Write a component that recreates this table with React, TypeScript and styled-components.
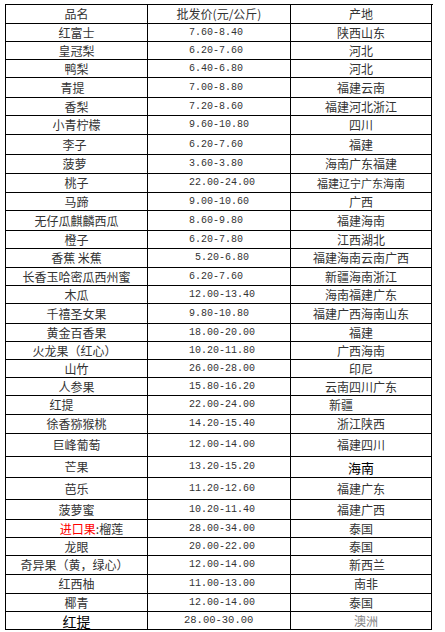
import type { ReactNode } from 'react';
import styled, { createGlobalStyle } from 'styled-components';

const GlobalStyle = createGlobalStyle`
  body {
    margin: 0;
    background: #fff;
    font-family: "Noto Sans CJK SC", "Liberation Sans", sans-serif;
  }
`;

const Page = styled.div`
  padding: 4px 0 0 5px;
`;

const Table = styled.div`
  display: flex;
  flex-direction: column;
  width: 427px;
  border-top: 1px solid #000;
  border-left: 1px solid #000;
`;

const Row = styled.div<{ $h: number }>`
  display: grid;
  grid-template-columns: 142px 143px 141px;
  height: ${(p) => p.$h}px;
`;

const Cell = styled.div<{ $shift?: number; $size?: number; $tone?: 'grey' | 'strong' }>`
  box-sizing: border-box;
  display: flex;
  align-items: center;
  justify-content: center;
  padding-left: ${(p) => Math.max(0, (p.$shift ?? 0) * 2)}px;
  padding-right: ${(p) => Math.max(0, -(p.$shift ?? 0) * 2)}px;
  border-right: 1px solid #000;
  border-bottom: 1px solid #000;
  color: ${(p) => (p.$tone === 'grey' ? '#858585' : p.$tone === 'strong' ? '#000' : '#333')};
  font-size: ${(p) => p.$size ?? 12}px;
  line-height: 1;
  white-space: pre;
`;

const PriceCell = styled(Cell)`
  justify-content: flex-start;
  padding-left: ${(p) => (p.$size ? 36 : 41)}px;
  padding-right: 0;
  font-family: "Liberation Mono", "DejaVu Sans Mono", monospace;
  font-size: ${(p) => p.$size ?? 10}px;
`;

const Red = styled.span`
  color: #f00;
`;

type Item = {
  name: ReactNode;
  price: string;
  origin: string;
  h: number;
  nameShift?: number;
  nameStrong?: boolean;
  priceSize?: number;
  originShift?: number;
  originSize?: number;
  originTone?: 'grey' | 'strong';
};

const items: Item[] = [
  { name: '红富士', price: '7.60-8.40', origin: '陕西山东', h: 18 },
  { name: '皇冠梨', price: '6.20-7.60', origin: '河北', h: 18 },
  { name: '鸭梨', price: '6.40-6.80', origin: '河北', h: 18 },
  { name: '青提', price: '7.00-8.80', origin: '福建云南', h: 20, nameShift: -4 },
  { name: '香梨', price: '7.20-8.60', origin: '福建河北浙江', h: 18 },
  { name: '小青柠檬', price: '9.60-10.80', origin: '四川', h: 19 },
  { name: '李子', price: '6.20-7.60', origin: '福建', h: 20, nameShift: -2 },
  { name: '菠萝', price: '3.60-3.80', origin: '海南广东福建', h: 19, nameShift: -2 },
  { name: '桃子', price: '22.00-24.00', origin: '福建辽宁广东海南', h: 19, originSize: 11 },
  { name: '马蹄', price: '9.00-10.60', origin: '广西', h: 18 },
  { name: '无仔瓜麒麟西瓜', price: '8.60-9.80', origin: '福建海南', h: 20 },
  { name: '橙子', price: '6.20-7.80', origin: '江西湖北', h: 18 },
  { name: '香蕉 米蕉', price: ' 5.20-6.80', origin: '福建海南云南广西', h: 19 },
  { name: '长香玉哈密瓜西州蜜', price: '6.20-7.60', origin: '新疆海南浙江', h: 18 },
  { name: '木瓜', price: '12.00-13.40', origin: '海南福建广东', h: 18 },
  { name: '千禧圣女果', price: '9.80-10.80', origin: '福建广西海南山东', h: 20 },
  { name: '黄金百香果', price: '18.00-20.00', origin: '福建', h: 18 },
  { name: '火龙果（红心）', price: '10.20-11.80', origin: '广西海南', h: 18, nameShift: -2 },
  { name: '山竹', price: '26.00-28.00', origin: '印尼', h: 18 },
  { name: '人参果', price: '15.80-16.20', origin: '云南四川广东', h: 18 },
  { name: '红提', price: '22.00-24.00', origin: '新疆', h: 19, nameShift: -15, originShift: -20 },
  { name: '徐香猕猴桃', price: '14.20-15.40', origin: '浙江陕西', h: 19 },
  { name: '巨峰葡萄', price: '12.00-14.00', origin: '福建四川', h: 23 },
  { name: '芒果', price: '13.20-15.20', origin: '海南', h: 21, originSize: 13, originTone: 'strong' },
  { name: '芭乐', price: '11.20-12.60', origin: '福建广东', h: 22 },
  { name: '菠萝蜜', price: '10.20-11.40', origin: '福建广西', h: 20 },
  {
    name: (
      <>
        <Red>进口果</Red>:榴莲
      </>
    ),
    price: '28.00-34.00',
    origin: '泰国',
    h: 18,
    nameShift: 15,
  },
  { name: '龙眼', price: '20.00-22.00', origin: '泰国', h: 18 },
  { name: '奇异果（黄，绿心）', price: '12.00-14.00', origin: '新西兰', h: 19, nameShift: -2, originShift: 6 },
  { name: '红西柚', price: '11.00-13.00', origin: '南非', h: 19, originShift: 5 },
  { name: '椰青', price: '12.00-14.00', origin: '泰国', h: 18 },
  {
    name: '红提',
    price: '28.00-30.00',
    origin: '澳洲',
    h: 18,
    nameStrong: true,
    priceSize: 10.5,
    originShift: 5,
    originTone: 'grey',
  },
];

const App = () => (
  <Page>
    <GlobalStyle />
    <Table>
      <Row $h={19}>
        <Cell>品名</Cell>
        <Cell>批发价(元/公斤)</Cell>
        <Cell>产地</Cell>
      </Row>
      {items.map((item, i) => (
        <Row key={i} $h={item.h}>
          <Cell
            $shift={item.nameShift}
            $size={item.nameStrong ? 14 : undefined}
            $tone={item.nameStrong ? 'strong' : undefined}
          >
            {item.name}
          </Cell>
          <PriceCell $size={item.priceSize}>{item.price}</PriceCell>
          <Cell $shift={item.originShift} $size={item.originSize} $tone={item.originTone}>
            {item.origin}
          </Cell>
        </Row>
      ))}
    </Table>
  </Page>
);

export default App;
